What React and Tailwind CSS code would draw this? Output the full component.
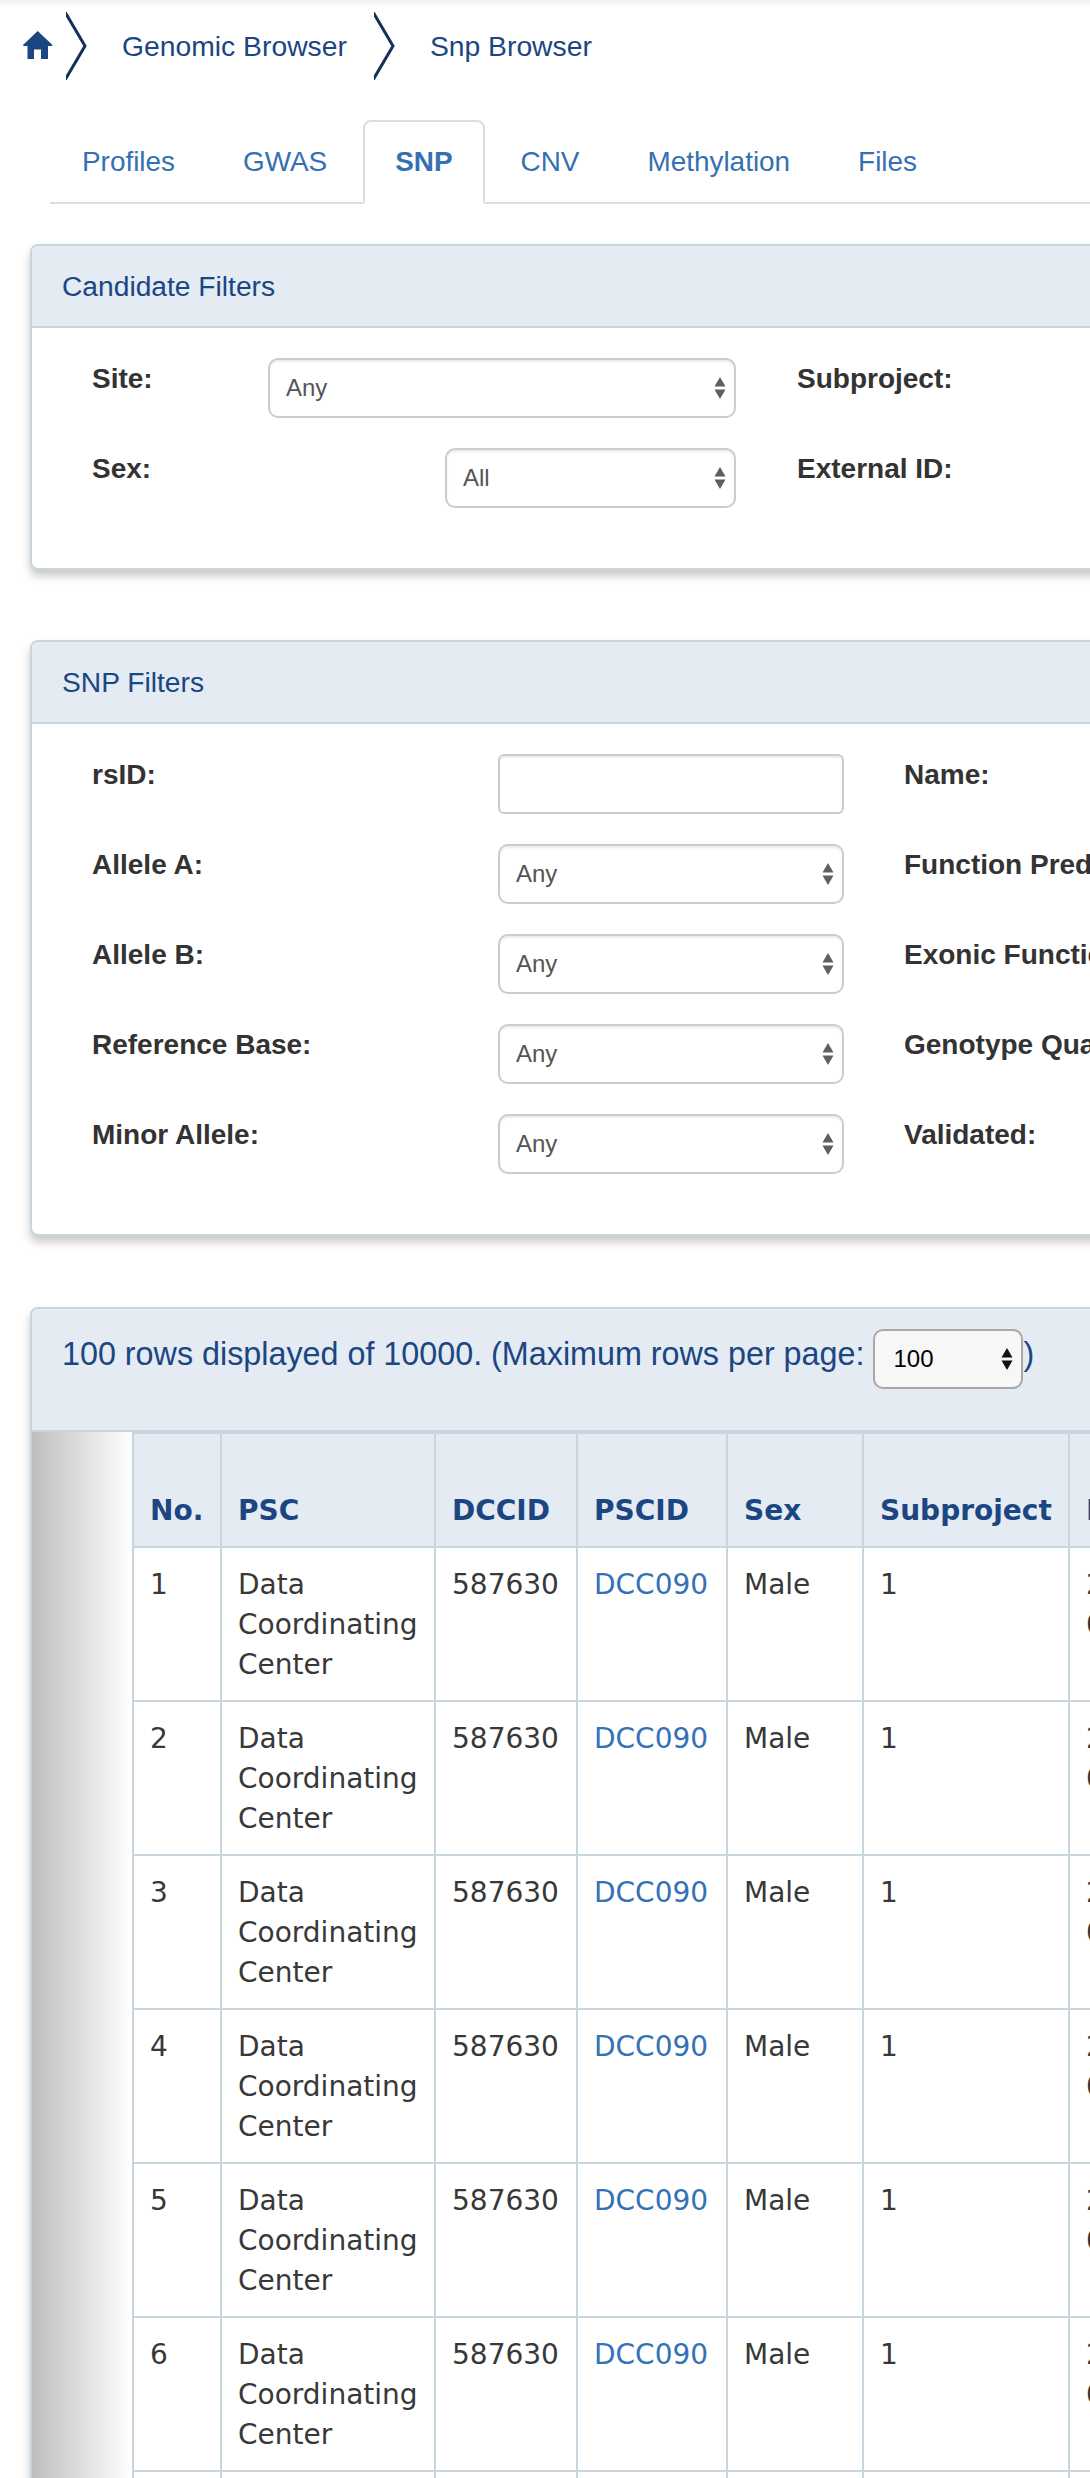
import React from "react";

const sans = "font-['Liberation_Sans',Arial,sans-serif]";

function Arrows({ dark }) {
  const fill = dark ? "#111111" : "#5f5f5f";
  return (
    <svg width="12" height="24" viewBox="0 0 12 24" className="shrink-0">
      <path d="M6 1 L11.5 10.5 H0.5 Z" fill={fill} />
      <path d="M0.5 13.5 H11.5 L6 23 Z" fill={fill} />
    </svg>
  );
}

function Select({ value, width }) {
  return (
    <div className={`${width} h-[60px] shrink-0 flex items-center justify-between pl-[16px] pr-[8px] border-2 border-[#cccccc] rounded-[10px] bg-white shadow-[inset_0_2px_2px_rgba(0,0,0,0.08)] text-[24px] text-[#555555]`}>
      <span>{value}</span>
      <Arrows />
    </div>
  );
}

function FilterRow({ left, right, leftWidth, gap, children }) {
  return (
    <div className="flex items-start">
      <div className={`${leftWidth} shrink-0 flex items-start justify-between`}>
        <label className="pt-[1px] font-bold text-[28px] leading-[40px] text-[#333333]">{left}</label>
        {children}
      </div>
      <label className={`${gap} pt-[1px] font-bold text-[28px] leading-[40px] text-[#333333] whitespace-nowrap`}>{right}</label>
    </div>
  );
}

function Panel({ title, children }) {
  return (
    <section className="w-[1300px] ml-[30px] border-2 border-[#c7d6de] rounded-[8px] bg-white shadow-[0_6px_10px_rgba(0,0,0,0.22)]">
      <h3 className="h-[82px] flex items-center pl-[30px] bg-[#e4ebf3] border-b-2 border-[#c7d6de] rounded-t-[6px] text-[28.2px] text-[#1b4682] font-normal">{title}</h3>
      {children}
    </section>
  );
}

const th = "border-r-2 border-b-2 border-[#c7d6de] bg-[#e4ebf3] px-[16px] pb-[15px] pt-[57px] text-left align-bottom font-bold text-[#1b4682] whitespace-nowrap";
const td = "border-r-2 border-b-2 border-[#c7d6de] bg-white px-[16px] pt-[17px] pb-[15px] align-top text-[#383838]";

function Row({ n }) {
  return (
    <tr>
      <td className={`${td} border-l-2`}>{n}</td>
      <td className={td}>Data Coordinating Center</td>
      <td className={td}>587630</td>
      <td className={td}><a className="text-[#3472b5]">DCC090</a></td>
      <td className={td}>Male</td>
      <td className={td}>1</td>
      <td className={`${td} whitespace-nowrap`}>2016-<br />06-22</td>
    </tr>
  );
}

export default function App() {
  return (
    <div className={`relative w-[1090px] h-[2478px] overflow-hidden bg-white ${sans}`}>
      <div className="h-[8px] -mb-[8px] bg-[linear-gradient(to_bottom,#f1f1f1,#ffffff)]" />

      <nav className="h-[92px] flex items-center pl-[23px] text-[28.3px] text-[#1b4682]">
        <svg width="30" height="28" viewBox="0 0 30 28" className="mt-[-2px] shrink-0">
          <path d="M14.7 0 L29.5 14 L29 15 H25 V28 H18 V18.5 H11 V28 H4.5 V15 H0.5 L0 14 Z" fill="#1b4682" />
        </svg>
        <svg width="21" height="68" viewBox="0 0 21 68" className="ml-[13px] shrink-0">
          <path d="M-1 0 L19 34 L-1 68" fill="none" stroke="#15305a" strokeWidth="3" />
        </svg>
        <span className="ml-[35px]">Genomic Browser</span>
        <svg width="21" height="68" viewBox="0 0 21 68" className="ml-[27px] shrink-0">
          <path d="M-1 0 L19 34 L-1 68" fill="none" stroke="#15305a" strokeWidth="3" />
        </svg>
        <span className="ml-[35px]">Snp Browser</span>
      </nav>

      <ul className="mt-[28px] ml-[50px] flex border-b-2 border-[#dddddd] text-[27.9px] leading-[40px] text-[#3470b2]">
        {["Profiles", "GWAS", "SNP", "CNV", "Methylation", "Files"].map((t) =>
          t === "SNP" ? (
            <li key={t} className="mr-[4px] -mb-[2px] px-[30px] py-[20px] border-2 border-[#dddddd] border-b-white rounded-t-[8px] bg-white font-bold">{t}</li>
          ) : (
            <li key={t} className="mr-[4px] -mb-[2px] px-[30px] py-[20px] border-2 border-transparent">{t}</li>
          )
        )}
      </ul>

      <div className="mt-[40px]">
        <Panel title="Candidate Filters">
          <div className="pt-[30px] pb-[60px] pl-[60px] flex flex-col gap-[30px]">
            <FilterRow left="Site:" right="Subproject:" leftWidth="w-[644px]" gap="ml-[61px]">
              <Select value="Any" width="w-[468px]" />
            </FilterRow>
            <FilterRow left="Sex:" right="External ID:" leftWidth="w-[644px]" gap="ml-[61px]">
              <Select value="All" width="w-[291px]" />
            </FilterRow>
          </div>
        </Panel>
      </div>

      <div className="mt-[70px]">
        <Panel title="SNP Filters">
          <div className="pt-[30px] pb-[60px] pl-[60px] flex flex-col gap-[30px]">
            <FilterRow left="rsID:" right="Name:" leftWidth="w-[752px]" gap="ml-[60px]">
              <input className="w-[346px] h-[60px] border-2 border-[#cccccc] rounded-[6px] bg-white shadow-[inset_0_2px_2px_rgba(0,0,0,0.08)]" />
            </FilterRow>
            <FilterRow left="Allele A:" right="Function Prediction:" leftWidth="w-[752px]" gap="ml-[60px]">
              <Select value="Any" width="w-[346px]" />
            </FilterRow>
            <FilterRow left="Allele B:" right="Exonic Function:" leftWidth="w-[752px]" gap="ml-[60px]">
              <Select value="Any" width="w-[346px]" />
            </FilterRow>
            <FilterRow left="Reference Base:" right="Genotype Quality:" leftWidth="w-[752px]" gap="ml-[60px]">
              <Select value="Any" width="w-[346px]" />
            </FilterRow>
            <FilterRow left="Minor Allele:" right="Validated:" leftWidth="w-[752px]" gap="ml-[60px]">
              <Select value="Any" width="w-[346px]" />
            </FilterRow>
          </div>
        </Panel>
      </div>

      <section className="mt-[71px] ml-[30px] w-[1300px] border-2 border-[#c7d6de] rounded-t-[8px] bg-white shadow-[0_6px_10px_rgba(0,0,0,0.22)]">
        <div className="h-[123px] flex items-start pl-[30px] pt-[20px] bg-[#e4ebf3] border-b-2 border-[#c7d6de] rounded-t-[6px] text-[#1b4682]">
          <span className="mt-[5px] text-[32.3px] leading-[40px] whitespace-nowrap">100 rows displayed of 10000. (Maximum rows per page:</span>
          <div className="ml-[9px] w-[150px] h-[60px] flex items-center justify-between pl-[18px] pr-[8px] border-2 border-[#a8a8a8] rounded-[10px] bg-[#f7f7f7] text-[24px] text-black">
            <span>100</span>
            <Arrows dark />
          </div>
          <span className="mt-[5px] text-[32.3px] leading-[40px]">)</span>
        </div>
        <div className="flex items-start">
          <div className="w-[100px] h-[1100px] shrink-0 bg-[linear-gradient(to_right,#bebebe,#ffffff)]" />
          <table className="table-fixed w-[1100px] shrink-0 border-separate border-spacing-0 text-[28px] leading-[40px] font-['DejaVu_Sans',Verdana,sans-serif]">
            <colgroup>
              <col className="w-[90px]" />
              <col className="w-[214px]" />
              <col className="w-[142px]" />
              <col className="w-[150px]" />
              <col className="w-[136px]" />
              <col className="w-[206px]" />
            </colgroup>
            <thead>
              <tr>
                {["No.", "PSC", "DCCID", "PSCID", "Sex", "Subproject", "DoB"].map((h, i) => (
                  <th key={h} className={`${th} border-t-2 ${i === 0 ? "border-l-2" : ""}`}>{h}</th>
                ))}
              </tr>
            </thead>
            <tbody>
              {[1, 2, 3, 4, 5, 6, 7].map((n) => <Row key={n} n={n} />)}
            </tbody>
          </table>
        </div>
      </section>
    </div>
  );
}
